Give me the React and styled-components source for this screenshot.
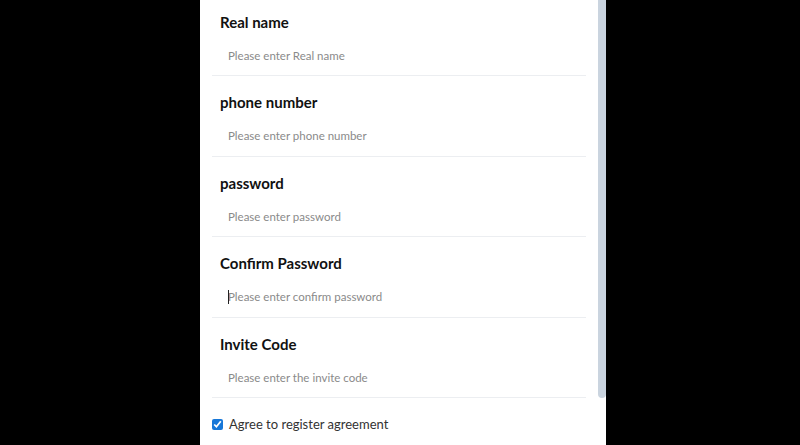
import React from "react";
import styled, { createGlobalStyle } from "styled-components";

const GlobalStyle = createGlobalStyle`
  html, body {
    margin: 0;
    padding: 0;
    background: #000;
    font-family: Lato, "Liberation Sans", sans-serif;
  }
`;

const fields = [
  { label: "Real name", placeholder: "Please enter Real name" },
  { label: "phone number", placeholder: "Please enter phone number" },
  { label: "password", placeholder: "Please enter password", type: "password" },
  {
    label: "Confirm Password",
    placeholder: "Please enter confirm password",
    type: "password",
    focus: true,
  },
  { label: "Invite Code", placeholder: "Please enter the invite code" },
];

export default function App() {
  return (
    <>
      <GlobalStyle />
      <Screen>
        <Panel>
          <Form>
            {fields.map((f) => (
              <Field key={f.label}>
                <Label>{f.label}</Label>
                <InputWrap $focused={f.focus}>
                  <Input type={f.type || "text"} placeholder={f.placeholder} />
                </InputWrap>
              </Field>
            ))}
            <Agree>
              <Check type="checkbox" defaultChecked />
              <span>Agree to register agreement</span>
            </Agree>
          </Form>
          <ScrollTrack>
            <ScrollThumb />
          </ScrollTrack>
        </Panel>
      </Screen>
    </>
  );
}

const Screen = styled.div`
  width: 800px;
  height: 445px;
  background: #000;
  display: flex;
`;

const Panel = styled.div`
  margin-left: 200px;
  width: 406px;
  height: 445px;
  background: #fff;
  display: flex;
  overflow: hidden;
`;

const Form = styled.div`
  flex: 1;
  padding: 0 12px 0 12px;
`;

const ScrollTrack = styled.div`
  width: 8px;
  flex-shrink: 0;
  background: #fff;
`;

const ScrollThumb = styled.div`
  height: 398px;
  background: #cad4df;
  border-radius: 0 0 4px 4px;
`;

const Field = styled.div`
  display: flex;
  flex-direction: column;
  padding: 16px 8px 5px;
  border-bottom: 1px solid #eceef1;

  &:first-child {
    padding-top: 11.5px;
  }
`;

const Label = styled.div`
  font-size: 15px;
  font-weight: 700;
  line-height: 21px;
  color: #111;
  margin-bottom: 7.5px;
`;

const InputWrap = styled.div`
  position: relative;
  display: flex;

  &::before {
    content: "";
    display: ${(p) => (p.$focused ? "block" : "none")};
    position: absolute;
    left: 8px;
    top: 8px;
    width: 1px;
    height: 14px;
    background: #222;
  }
`;

const Input = styled.input`
  flex: 1;
  height: 30px;
  border: none;
  outline: none;
  background: transparent;
  padding: 0 8px;
  font-family: Lato, "Liberation Sans", sans-serif;
  font-size: 11.5px;
  color: #333;

  &::placeholder {
    color: #8a8a8a;
  }
`;

const Agree = styled.label`
  display: flex;
  align-items: center;
  margin-top: 16px;
  line-height: 20px;
  font-size: 13px;
  color: #333;
`;

const Check = styled.input`
  width: 11px;
  height: 11px;
  margin: 0 6px 0 0;
  accent-color: #1677d8;
`;
